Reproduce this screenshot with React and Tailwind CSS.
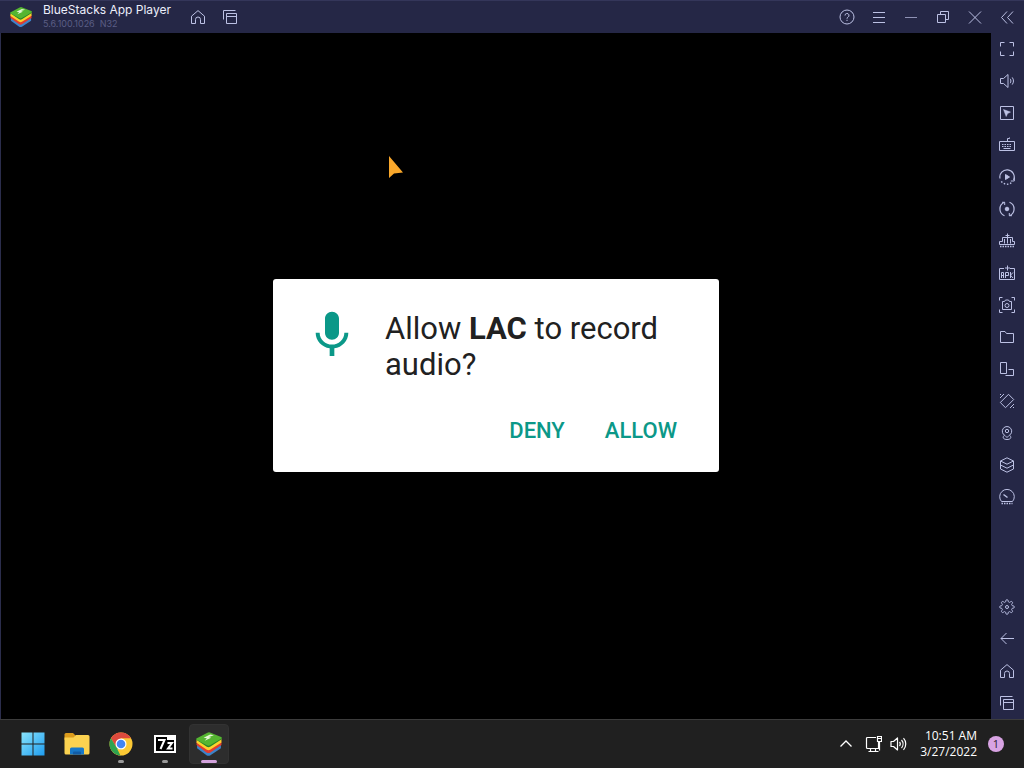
import React from "react";

function Icon({ children, size = "size-4" }) {
  return (
    <svg
      viewBox="0 0 16 16"
      className={size}
      fill="none"
      stroke="currentColor"
      strokeWidth="1"
      aria-hidden="true"
    >
      {children}
    </svg>
  );
}

const homeShape = <path d="M1.5 7.2 8 1.6l6.5 5.6v7.3h-4v-4a2.5 2.5 0 0 0-5 0v4h-4z" />;

const recentsShape = (
  <>
    <path d="M1.5 10.5v-9h12" />
    <path d="M4.5 4.5h10v10h-10zM4.5 7.5h10" />
  </>
);

// Outline of an eight-toothed gear around the centre of a 16 unit box.
const gearOutline =
  Array.from({ length: 96 }, (_, i) => {
    const angle = (i / 96) * Math.PI * 2;
    const wave = Math.cos(8 * angle);
    const radius = 6.2 + 1.1 * Math.sign(wave) * Math.sqrt(Math.abs(wave));
    const x = 8 + radius * Math.sin(angle);
    const y = 8 - radius * Math.cos(angle);
    return `${i ? "L" : "M"}${x.toFixed(2)} ${y.toFixed(2)}`;
  }).join("") + "z";

const sideTools = [
  {
    label: "Full screen",
    shape: <path d="M1.5 5.5v-4h4M10.5 1.5h4v4M14.5 10.5v4h-4M5.5 14.5h-4v-4" />,
  },
  {
    label: "Volume",
    shape: (
      <>
        <path d="M1.5 5.5h3l4.5-4v13l-4.5-4h-3z" />
        <path d="M11.2 5.8c.9 1.3.9 3.1 0 4.400M13.200 4.400c1.700 2.200 1.700 5 0 7.200" />
      </>
    ),
  },
  {
    label: "Lock cursor",
    shape: (
      <>
        <path d="M1.500 1.500h13v13h-13z" />
        <path d="m4.500 4.500 7 2.600-2.900 1.400-1.400 3z" fill="currentColor" strokeWidth="0.500" />
      </>
    ),
  },
  {
    label: "Game controls",
    shape: (
      <>
        <path d="M.5 4.500h15v9H.5zM8.500 4.500v-3h2v-1" />
        <path d="M3 7.500h10M3 9.500h10" strokeDasharray="1.500 1" />
        <path d="M4.500 11.500h7" />
      </>
    ),
  },
  {
    label: "Macro recorder",
    shape: (
      <>
        <path d="M1 9.500A7.200 7.200 0 1 1 14.600 11" strokeWidth="1.200" />
        <path d="M15.300 8.500v3.500h-3.500" />
        <path d="M12.300 13.800A7 7 0 0 1 1.800 11.500" strokeWidth="1.400" strokeDasharray="1.500 1.700" />
        <path d="m6.500 5.500 4 2.500-4 2.500z" fill="currentColor" />
      </>
    ),
  },
  {
    label: "Sync operations",
    shape: (
      <>
        <path d="M5.500 14.700A7.200 7.200 0 0 1 5.500 1.300M10.500 1.300A7.200 7.200 0 0 1 10.500 14.700" strokeWidth="1.200" />
        <path d="M3 1.300h2.700V4M13 14.700h-2.700V12" />
        <circle cx="8" cy="8" r="1.800" fill="currentColor" />
      </>
    ),
  },
  {
    label: "Memory trim",
    shape: (
      <>
        <path d="M8.500.5v4M6.500 2.500h4M3.500 8.500v-4h10v4M5.500 6v4.500M8.500 5v5.500M11.500 6v4.500" />
        <path d="M3.500 8.500H.5v3h15v-3h-2" />
        <path d="M1 13.500h14" strokeWidth="1.300" strokeDasharray="1.500 1" />
      </>
    ),
  },
  {
    label: "Install APK",
    shape: (
      <>
        <path d="M5 3.500H.5v11h15v-11H11M8.500.5v5M6 3h5" />
        <path d="M2.500 13V7.500h2V13M2.500 10.500h2M6.500 13V7.500h3v3h-3M11.500 7v6M14 7.500l-2.500 2.700L14 13" />
      </>
    ),
  },
  {
    label: "Screenshot",
    shape: (
      <>
        <path d="M.5 3.500v-3h3M12.500.5h3v3M15.500 12.500v3h-3M3.500 15.500h-3v-3" />
        <path d="M3.500 4.500h2l1-1.500h3l1 1.500h2v8h-9z" />
        <circle cx="8" cy="8.500" r="2" />
      </>
    ),
  },
  {
    label: "Media folder",
    shape: <path d="M1.500 13.500v-11h4.500l1.500 2h7v9z" />,
  },
  {
    label: "Rotate",
    shape: <path d="M1.500 1.500h6v11h-6zM9.500 8.500h5v6h-8" />,
  },
  {
    label: "Shake",
    shape: (
      <>
        <path d="m9.500 1.300 5.200 5.200-8.200 8.200-5.200-5.200z" />
        <path d="M1 5l4-4M1 2l1-1M11 15l4-4M14 15l1-1" />
      </>
    ),
  },
  {
    label: "Set location",
    shape: (
      <>
        <path d="M6 10.500A4.700 4.700 0 1 1 10 10.500L8 12.500z" />
        <circle cx="8" cy="6" r="1.700" />
        <path d="M5 10.500c-2 2.500 0 4 3 4s5-1.500 3-4" />
      </>
    ),
  },
  {
    label: "Multi-instance manager",
    shape: (
      <>
        <path d="m8 .8 6.500 3.200L8 7.200 1.500 4z" />
        <path d="M1.500 4v8L8 15.200l6.500-3.200V4M1.500 8 8 11.200 14.500 8" />
      </>
    ),
  },
  {
    label: "Eco mode",
    shape: (
      <>
        <path d="M2.500 12.500A7.300 7.300 0 1 1 13.500 12.500z" />
        <path d="m4.500 5.500 4 3" strokeWidth="1.500" />
        <path d="M2.500 14.500h11" strokeWidth="1.300" strokeDasharray="1.500 1" />
      </>
    ),
  },
];

const navTools = [
  {
    label: "Settings",
    shape: (
      <>
        <path d={gearOutline} strokeLinejoin="round" />
        <circle cx="8" cy="8" r="1.500" />
      </>
    ),
  },
  { label: "Back", shape: <path d="M15 7.500H2M7.500 2 2 7.500 7.500 13" /> },
  { label: "Home", shape: homeShape },
  { label: "Recent apps", shape: recentsShape },
];

const windowTools = [
  {
    label: "Help",
    shape: (
      <>
        <circle cx="8" cy="8" r="7" />
        <path d="M6 6.500a2 2 0 1 1 3 1.700c-.7.400-1 .8-1 1.500M8 10.800v1.200" />
      </>
    ),
  },
  { label: "Menu", shape: <path d="M2 3.500h12M2 8.500h12M2 13.500h12" /> },
  { label: "Minimize", shape: <path d="M2 8.500h12" strokeOpacity="0.7" /> },
  {
    label: "Restore",
    shape: <path d="M2.500 5.500h8v8h-8zM5.500 5V2.500h8v8H11" />,
  },
  { label: "Close", shape: <path d="m2 2.500 12 12M14 2.500l-12 12" /> },
  { label: "Collapse sidebar", shape: <path d="M8 2.500 2.500 8.500 8 14.500M14 2.500 8.500 8.500l5.500 6" /> },
];

function ToolButton({ label, shape }) {
  return (
    <button
      type="button"
      aria-label={label}
      className="flex size-8 shrink-0 items-center justify-center text-[#bcc1e4] hover:text-white"
    >
      <Icon>{shape}</Icon>
    </button>
  );
}

function BlueStacksLogo({ className }) {
  return (
    <svg viewBox="0 0 24 24" className={className} aria-hidden="true">
      <path d="M1 16 10 22.500q1.500.8 3 0L23 16v-3L1 12.500z" fill="#3d83c9" />
      <path d="M.5 13 10 20q1.500.8 3 0L23.500 13V10L.5 10z" fill="#e23c2e" />
      <path d="M.5 10.800 10 17.300q1.500.8 3 0l10.500-6.700V7L.5 8z" fill="#fbd22c" />
      <path d="M.3 8 10 14.500q1.500.8 3 0L23.700 7.500V6L.3 7.200z" fill="#24852a" />
      <path d="M.8 6.800 10.500 1.500q1.500-.8 3 0l9.700 4q1.200.8 0 1.600L13 13.200q-1.500.8-3 0L.8 8.200q-1-.8 0-1.400z" fill="#55b531" />
      <path d="m7 6.200 6-3 3.500.8-4.500 1.500 2 .8L8 9l2-2.200z" fill="#e4f6d4" />
    </svg>
  );
}

const taskbarApps = [
  {
    label: "Start",
    icon: (
      <svg viewBox="0 0 24 24" className="size-6" aria-hidden="true">
        <defs>
          <linearGradient id="start-fill" gradientUnits="userSpaceOnUse" x1="0" y1="0" x2="24" y2="24">
            <stop offset="0" stopColor="#8be6fd" />
            <stop offset="1" stopColor="#1c9bef" />
          </linearGradient>
        </defs>
        <path d="M.5.500h11v11H.5zM12.500.500h11v11h-11zM.5 12.500h11v11H.5zM12.500 12.500h11v11h-11z" fill="url(#start-fill)" />
      </svg>
    ),
  },
  {
    label: "File Explorer",
    icon: (
      <svg viewBox="0 0 26 24" className="h-6 w-[26px]" aria-hidden="true">
        <path d="M.5 2.500q0-1.500 1.500-1.500h7l3 3v4H.5z" fill="#dc9c1c" />
        <path d="M.5 5.500h9l2.500-2.500h12q1.500 0 1.500 1.500V21q0 1.500-1.500 1.500H2Q.5 22.500.5 21z" fill="#fbd250" />
        <path d="M6 22.500V17q0-1.500 1.500-1.500h11Q20 15.500 20 17v5.500z" fill="#1778c8" />
        <path d="M9 22.500v-2q0-1 1-1h6q1 0 1 1v2z" fill="#125ca5" />
      </svg>
    ),
  },
  {
    label: "Google Chrome",
    running: true,
    icon: (
      <svg viewBox="0 0 24 24" className="size-6" aria-hidden="true">
        <circle cx="12" cy="12" r="11.500" fill="#fcc934" />
        <path d="M2 6.300A11.500 11.500 0 0 1 22 6.300H12L7 15z" fill="#dd4a3d" />
        <path d="M2 6.300 7 14.800q2 3 6 2.700L11.500 23.500A11.500 11.500 0 0 1 2 6.300z" fill="#2da350" />
        <path d="M11.500 23.500 17 14.800l-5 2.700-4-1z" fill="#fcc934" />
        <circle cx="12" cy="12" r="5.500" fill="#fff" />
        <circle cx="12" cy="12" r="4.300" fill="#4285f4" />
      </svg>
    ),
  },
  {
    label: "7-Zip",
    running: true,
    icon: (
      <svg viewBox="0 0 22 18" className="h-[18px] w-[22px]" aria-hidden="true">
        <path d="M0 0h22v18H0z" fill="#fff" />
        <path d="M2 2h11v3h7v11H2z" fill="#000" />
        <path d="M4 5h6.500L6.500 14M13.500 8h4.500l-4 5.500h4.500" stroke="#fff" strokeWidth="2" fill="none" />
      </svg>
    ),
  },
  {
    label: "BlueStacks",
    active: true,
    icon: <BlueStacksLogo className="size-[26px]" />,
  },
];

function TaskbarButton({ label, icon, running, active }) {
  return (
    <button
      type="button"
      aria-label={label}
      className={
        active
          ? "relative flex size-10 items-center justify-center rounded border border-[#323232] bg-[#2d2d2d]"
          : "relative flex size-10 items-center justify-center rounded"
      }
    >
      {icon}
      {running && <span className="absolute bottom-px h-[3px] w-1.5 rounded-full bg-[#9a9a9a]" />}
      {active && <span className="absolute bottom-0 h-[3px] w-4 rounded-full bg-[#d3a3dd]" />}
    </button>
  );
}

function TitleBar() {
  return (
    <header className="flex h-[33px] shrink-0 items-center border-t border-[#34365a] bg-[#252746] pr-px">
      <BlueStacksLogo className="ml-2.5 size-[22px]" />
      <div className="ml-[11px] w-[139px] font-['Inter',sans-serif]">
        <h1 className="text-[12px] leading-[14px] whitespace-nowrap text-[#eceefa]">BlueStacks App Player</h1>
        <p className="text-[9px] leading-[14px] text-[#5b5e85]">5.6.100.1026&nbsp; N32</p>
      </div>
      <ToolButton label="Home" shape={homeShape} />
      <ToolButton label="Recent apps" shape={recentsShape} />
      <div className="ml-auto flex">
        {windowTools.map((tool) => (
          <ToolButton key={tool.label} {...tool} />
        ))}
      </div>
    </header>
  );
}

function PermissionDialog() {
  return (
    <section
      role="dialog"
      aria-labelledby="permission-title"
      className="w-full max-w-[446px] rounded-[3px] bg-white pt-8 pr-[30px] pb-5 pl-[31px] font-['Roboto',sans-serif]"
    >
      <div className="flex items-start gap-[25px]">
        <svg viewBox="0 0 24 24" className="-mt-1 size-14 shrink-0 fill-[#0b9888]" aria-hidden="true">
          <path d="M12 14c1.660 0 3-1.340 3-3V5c0-1.660-1.340-3-3-3S9 3.340 9 5v6c0 1.660 1.340 3 3 3zm5.300-3c0 3-2.540 5.100-5.300 5.100S6.700 14 6.700 11H5c0 3.410 2.720 6.230 6 6.720V21h2v-3.280c3.280-.480 6-3.300 6-6.720h-1.700z" />
        </svg>
        <h2 id="permission-title" className="text-[31px] leading-9 text-[#212121]">
          Allow <b>LAC</b> to record audio?
        </h2>
      </div>
      <div className="mt-[25px] flex justify-end gap-4 text-[22px] font-medium text-[#0b9888]">
        <button type="button" className="h-11 px-3">DENY</button>
        <button type="button" className="h-11 px-3">ALLOW</button>
      </div>
    </section>
  );
}

function Taskbar() {
  return (
    <footer className="flex h-[49px] shrink-0 items-center border-t border-[#3c3c3c] bg-[#202020] pr-5 pl-[13px] text-white">
      <nav className="flex gap-1" aria-label="Taskbar">
        {taskbarApps.map((app) => (
          <TaskbarButton key={app.label} {...app} />
        ))}
      </nav>
      <div className="ml-auto flex items-center">
        <button type="button" aria-label="Show hidden icons" className="mr-[11px]">
          <Icon>
            <path d="m2.500 10.500 5.500-5.500 5.500 5.500" strokeWidth="1.300" />
          </Icon>
        </button>
        <button type="button" aria-label="Network and volume" className="mr-[13px] flex gap-2">
          <svg viewBox="0 0 17 18" className="h-[18px] w-[17px]" fill="none" stroke="currentColor" strokeWidth="1.200" aria-hidden="true">
            <path d="M11 2.500H2.500Q1.500 2.500 1.500 3.500v9q0 1 1 1h11V7M5.500 13.500v3M10.500 13.500v3M3.500 16.500h10" />
            <path d="M12.500 1.500h4v5h-4zM14.500 6.500v9M12.500 3.500h4" />
          </svg>
          <svg viewBox="0 0 17 18" className="h-[18px] w-[17px]" fill="none" stroke="currentColor" strokeWidth="1.200" aria-hidden="true">
            <path d="M1 6.500h2.500L7.500 3v12l-4-3.500H1z" strokeLinejoin="round" />
            <path d="M9.500 7c1 1.200 1 2.800 0 4M11.500 5c2 2.300 2 5.700 0 8M13.500 3.200c3 3.300 3 8.300 0 11.600" />
          </svg>
        </button>
        <time dateTime="2022-03-27T10:51" className="text-right font-['Open_Sans',sans-serif] text-[12px] leading-4">
          10:51 AM
          <br />
          3/27/2022
        </time>
        <span className="ml-[11px] flex size-4 items-center justify-center rounded-full bg-[#d8a3e3] font-['Open_Sans',sans-serif] text-[11px] leading-4 text-[#2a2030]">
          1
        </span>
      </div>
    </footer>
  );
}

export default function App() {
  return (
    <div className="flex min-h-screen flex-col bg-[#202020]">
      <TitleBar />
      <div className="flex flex-1 bg-[#252746]">
        <main className="relative flex flex-1 items-center justify-center border-l border-[#2b2d4c] bg-black pb-px">
          <svg viewBox="0 0 17 22" className="absolute top-[18%] left-[39%] h-[22px] w-[17px]" aria-hidden="true">
            <path d="M2 0v22l5-4.500 9-1z" fill="#f9a72b" />
          </svg>
          <PermissionDialog />
        </main>
        <aside className="flex w-[33px] shrink-0 flex-col justify-between pr-px">
          <div>
            {sideTools.map((tool) => (
              <ToolButton key={tool.label} {...tool} />
            ))}
          </div>
          <div>
            {navTools.map((tool) => (
              <ToolButton key={tool.label} {...tool} />
            ))}
          </div>
        </aside>
      </div>
      <Taskbar />
    </div>
  );
}
